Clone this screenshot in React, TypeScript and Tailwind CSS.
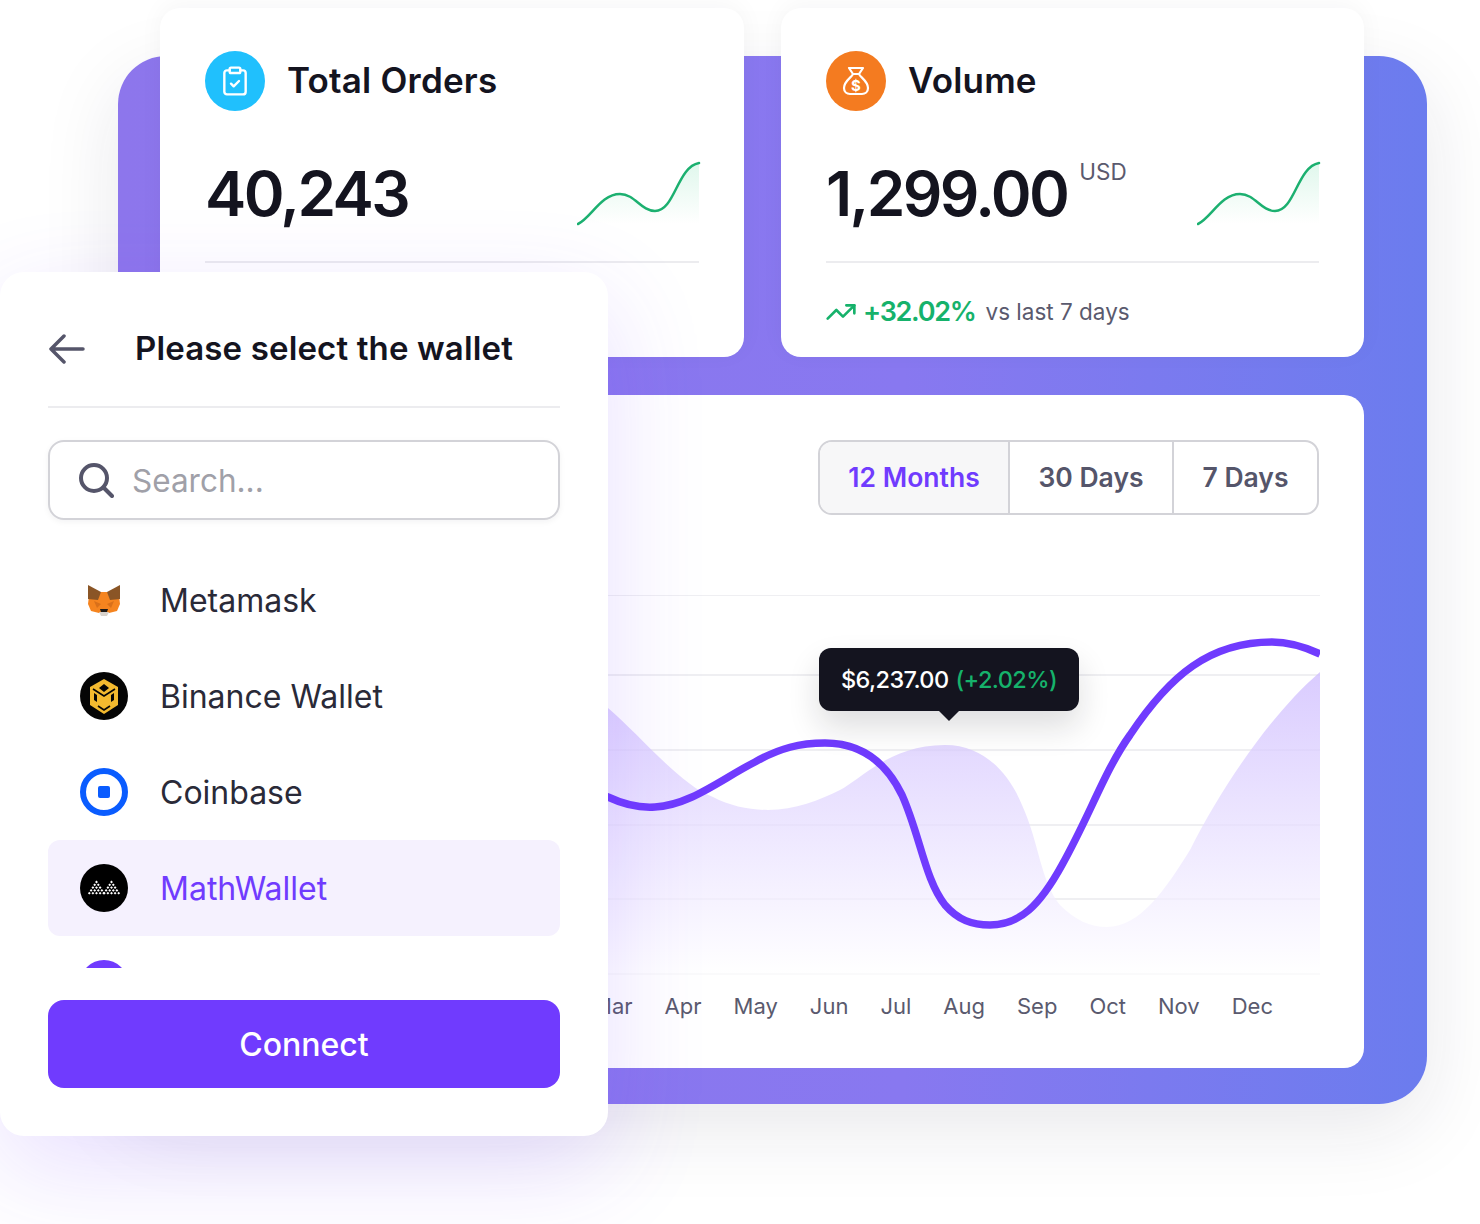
import { ClipboardCheck, TrendingUp } from 'lucide-react'

const wallets = [
  { name: 'Metamask', icon: <FoxIcon /> },
  { name: 'Binance Wallet', icon: <BinanceIcon /> },
  { name: 'Coinbase', icon: <CoinbaseIcon /> },
  { name: 'MathWallet', icon: <MathIcon />, active: true },
  { name: '', icon: <div className="size-12 rounded-full bg-[#703bfe]" /> },
]

const months = ['Jan', 'Feb', 'Mar', 'Apr', 'May', 'Jun', 'Jul', 'Aug', 'Sep', 'Oct', 'Nov', 'Dec']
const gridLines = [595, 675, 750, 825, 899, 974]

const areaCurve =
  'M608 708C640 735 680 785 713 797C730 806 750 810 768 810C795 810 820 800 840 790C860 780 890 745 945 745C985 745 1010 775 1022 805C1040 845 1040 880 1060 905C1075 920 1090 927 1107 927C1140 927 1165 890 1190 850C1220 790 1270 715 1320 672V975H205V640C400 620 560 660 608 708Z'

function FoxIcon() {
  return (
    <svg width="48" height="48" viewBox="0 0 48 48">
      <polygon points="9,20 21,16 27,16 39,20 40,28 37,35 29,37 19,37 11,35 8,28" fill="#f5841f" />
      <polygon points="8,9 21,16 18,24 8,23" fill="#8a5526" />
      <polygon points="40,9 27,16 30,24 40,23" fill="#8a5526" />
      <polygon points="14,25 21,28 17,32" fill="#d9701a" />
      <polygon points="34,25 27,28 31,32" fill="#d9701a" />
      <polygon points="19,36 29,36 27,40 21,40" fill="#d8d2cc" />
      <polygon points="20,33 28,33 27,36 21,36" fill="#1f1a17" />
    </svg>
  )
}

function BinanceIcon() {
  return (
    <svg width="48" height="48" viewBox="0 0 48 48">
      <circle cx="24" cy="24" r="24" fill="#050505" />
      <polygon points="24,7 38,15 38,33 24,42 10,33 10,15" fill="#f3ba2f" />
      <polygon points="24,12 29,16 24,20 19,16" fill="#050505" />
      <polygon points="14,21 17,23 17,30 14,28" fill="#050505" />
      <polygon points="34,21 31,23 31,30 34,28" fill="#050505" />
      <path d="M13 17l11 7 11-7M18 34l6 4 6-4" fill="none" stroke="#050505" strokeWidth="1.6" />
    </svg>
  )
}

function CoinbaseIcon() {
  return (
    <div className="flex size-12 items-center justify-center rounded-full border-[6px] border-[#0a5cff] bg-white">
      <div className="size-[12px] rounded-[2px] bg-[#0a5cff]" />
    </div>
  )
}

function MathIcon() {
  const dots: [number, number][] = []
  for (const cx of [16.5, 31.5]) {
    for (let row = 0; row < 5; row++) {
      for (let i = -row; i <= row; i += 2) {
        dots.push([cx + i * 1.8, 18 + row * 2.8])
      }
    }
  }
  return (
    <svg width="48" height="48" viewBox="0 0 48 48">
      <circle cx="24" cy="24" r="24" fill="#000" />
      {dots.map(([x, y], i) => (
        <rect key={i} x={x - 1} y={y - 1} width="2" height="2" fill="#fff" transform={`rotate(45 ${x} ${y})`} />
      ))}
    </svg>
  )
}

function BagIcon() {
  return (
    <svg width="32" height="32" viewBox="0 0 32 32" fill="none" stroke="#fff" strokeWidth="2.2" strokeLinejoin="round" strokeLinecap="round">
      <path d="M9 3h14l-4 6h-6z" />
      <path d="M13 9h6c1 3 9 7 9 14 0 4-3 6-6 6H10c-3 0-6-2-6-6 0-7 8-11 9-14z" />
      <text x="16" y="25.5" textAnchor="middle" fontSize="15" fontWeight="700" fill="#fff" stroke="none" fontFamily="Inter, sans-serif">$</text>
    </svg>
  )
}

function Sparkline({ id }: { id: string }) {
  return (
    <svg width="124" height="66" viewBox="0 0 124 66" className="shrink-0">
      <defs>
        <linearGradient id={id} x1="0" y1="0" x2="0" y2="1">
          <stop offset="0" stopColor="#22c77a" stopOpacity="0.14" />
          <stop offset="1" stopColor="#22c77a" stopOpacity="0" />
        </linearGradient>
      </defs>
      <path d="M1 63C14 57 24 33 43 33C58 33 64 50 78 50C98 50 100 6 122 2V62H1Z" fill={`url(#${id})`} />
      <path d="M1 63C14 57 24 33 43 33C58 33 64 50 78 50C98 50 100 6 122 2" fill="none" stroke="#1cb070" strokeWidth="2.5" strokeLinecap="round" />
    </svg>
  )
}

function StatCard({ icon, iconBg, title, value, unit, id }: { icon: React.ReactNode; iconBg: string; title: string; value: string; unit?: string; id: string }) {
  return (
    <div className="flex h-[349px] flex-col rounded-[20px] bg-white px-[45px] pt-[43px] shadow-[0_-4px_24px_rgba(30,30,60,0.04)]">
      <div className="flex items-center gap-[22px]">
        <div className={`flex size-[60px] items-center justify-center rounded-full ${iconBg}`}>{icon}</div>
        <h3 className="pb-[2px] text-[35px] leading-[58px] font-semibold tracking-[0.2px] text-[#14141f]">{title}</h3>
      </div>
      <div className="mt-[47px] flex h-[72px] items-center justify-between">
        <div className="flex items-start">
          <span className="text-[62px] leading-[72px] font-semibold tracking-[-2.6px] text-[#14141f]">{value}</span>
          {unit && <span className="-mt-[1px] ml-[12px] text-[22.5px] leading-[30px] text-[#5a5a6e]">{unit}</span>}
        </div>
        <div className="-mr-[2px]">
          <Sparkline id={id} />
        </div>
      </div>
      <div className="mt-[31px] h-[2px] bg-[#ececef]" />
      <div className="mt-[33px] -ml-[1px] flex items-center">
        <TrendingUp className="size-[32px] text-[#16b26b]" strokeWidth={2} />
        <span className="ml-[6px] text-[27px] leading-[32px] font-semibold tracking-[-1.3px] text-[#16b26b]">+32.02%</span>
        <span className="ml-[10px] text-[22.5px] leading-[32px] text-[#5a5a6e]">vs last 7 days</span>
      </div>
    </div>
  )
}

function Chart() {
  return (
    <div className="relative mt-[80px] h-[380px]">
      <svg width="1115" height="380" viewBox="205 595 1115 380" className="block">
        <defs>
          <linearGradient id="area" x1="0" y1="650" x2="0" y2="975" gradientUnits="userSpaceOnUse">
            <stop offset="0" stopColor="#703bfe" stopOpacity="0.28" />
            <stop offset="0.45" stopColor="#703bfe" stopOpacity="0.15" />
            <stop offset="1" stopColor="#703bfe" stopOpacity="0" />
          </linearGradient>
        </defs>
        {gridLines.map((y) => (
          <rect key={y} x="205" y={y - 1} width="1115" height="2" fill="#efeff2" />
        ))}
        <path d={areaCurve} fill="#fff" fillOpacity="0.65" />
        <path d={areaCurve} fill="url(#area)" />
        <path
          d="M560 770C580 785 595 792 608 797C625 805 640 808 655 807C690 805 720 780 755 762C780 748 800 743 825 743C860 743 885 760 902 795C920 835 925 880 945 905C958 920 972 925 990 925C1020 925 1040 905 1062 865C1090 815 1105 770 1130 735C1170 675 1210 642 1272 642C1290 642 1305 647 1320 654"
          fill="none"
          stroke="#703bfe"
          strokeWidth="7.5"
        />
      </svg>
      <div className="absolute top-[53px] left-[614px] flex h-[63px] w-[260px] items-center justify-center gap-[7px] rounded-[12px] bg-[#14141f] text-[23.5px] font-medium tracking-[-0.6px] shadow-[0_16px_32px_rgba(20,20,31,0.14)]">
        <span className="text-white">$6,237.00</span>
        <span className="text-[#16b26b]">(+2.02%)</span>
        <div className="absolute top-[62px] left-[119px] size-0 border-x-[11px] border-t-[11px] border-x-transparent border-t-[#14141f]" />
      </div>
    </div>
  )
}

function ChartCard() {
  return (
    <div className="flex h-[673px] flex-col rounded-[20px] bg-white px-[45px] pt-[45px]">
      <div className="flex justify-end">
        <div className="flex h-[75px] overflow-hidden rounded-[14px] border-2 border-[#d3d3d8] text-[26.5px] font-semibold text-[#55556a]">
          <div className="flex w-[188px] items-center justify-center bg-[#f7f7f8] text-[#703bfe]">12 Months</div>
          <div className="flex w-[164px] items-center justify-center border-l-2 border-[#d3d3d8]">30 Days</div>
          <div className="flex w-[145px] items-center justify-center border-l-2 border-[#d3d3d8]">7 Days</div>
        </div>
      </div>
      <Chart />
      <div className="mt-[15px] flex justify-end gap-[32px] pr-[46px] text-[22px] leading-[32px] text-[#5a5a6e]">
        {months.map((m) => (
          <span key={m}>{m}</span>
        ))}
      </div>
    </div>
  )
}

function WalletModal() {
  return (
    <div className="absolute top-[272px] left-0 flex h-[864px] w-[608px] flex-col rounded-[24px] bg-white p-[48px] shadow-[0_32px_100px_rgba(112,59,254,0.16)]">
      <div className="flex h-[88px] shrink-0 items-start border-b-2 border-[#ececef]">
        <div className="flex h-[58px] items-center gap-[50px] pl-[1px]">
          <svg width="36" height="30" viewBox="0 0 36 30" fill="none" stroke="#55556a" strokeWidth="3.5" strokeLinecap="round" strokeLinejoin="round">
            <path d="M34 15H2M15 2L2 15l13 13" />
          </svg>
          <h2 className="text-[33px] font-semibold tracking-[0.15px] text-[#14141f]">Please select the wallet</h2>
        </div>
      </div>
      <div className="mt-[32px] flex h-[80px] shrink-0 items-center gap-[18px] rounded-[16px] border-2 border-[#d3d3d8] pl-[29px] shadow-[0_2px_6px_rgba(20,20,31,0.05)]">
        <svg width="35" height="35" viewBox="0 0 35 35" fill="none" stroke="#55556a" strokeWidth="4" strokeLinecap="round">
          <circle cx="15" cy="15" r="13" />
          <path d="M25 25l8 8" />
        </svg>
        <span className="pt-[2px] text-[31.5px] text-[#a0a0a8]">Search...</span>
      </div>
      <div className="mt-[32px] h-[416px] shrink-0 overflow-hidden">
        {wallets.map((w, i) => (
          <div key={i} className={`flex h-[96px] items-center gap-[32px] rounded-[12px] pl-[32px] text-[32px] ${w.active ? 'bg-[#f5f1fe] text-[#703bfe]' : 'text-[#2a2a38]'}`}>
            <div className="size-12 shrink-0">{w.icon}</div>
            {w.name && <span className="pt-[2px]">{w.name}</span>}
          </div>
        ))}
      </div>
      <button className="mt-[32px] flex h-[88px] shrink-0 items-center justify-center rounded-[16px] bg-[#703bfe] pt-[2px] text-[32px] font-medium text-white">Connect</button>
    </div>
  )
}

export default function App() {
  return (
    <div className="relative h-[1224px] w-[1480px] overflow-hidden bg-white font-['Inter',sans-serif]">
      <div className="absolute top-[56px] left-[118px] h-[1048px] w-[1309px] rounded-[48px] bg-gradient-to-r from-[#8d76ec] via-[#8878f0] via-60% to-[#6b7cee] shadow-[0_24px_80px_rgba(30,30,60,0.1)]">
        <div className="-mt-[48px] ml-[42px] grid w-[1204px] grid-cols-[584px_583px] gap-x-[37px] gap-y-[38px]">
          <StatCard id="spark-a" icon={<ClipboardCheck className="size-[32px] text-white" strokeWidth={1.8} />} iconBg="bg-[#20c0fd]" title="Total Orders" value="40,243" />
          <StatCard id="spark-b" icon={<BagIcon />} iconBg="bg-[#f47b20]" title="Volume" value="1,299.00" unit="USD" />
          <div className="col-span-2">
            <ChartCard />
          </div>
        </div>
      </div>
      <WalletModal />
    </div>
  )
}
